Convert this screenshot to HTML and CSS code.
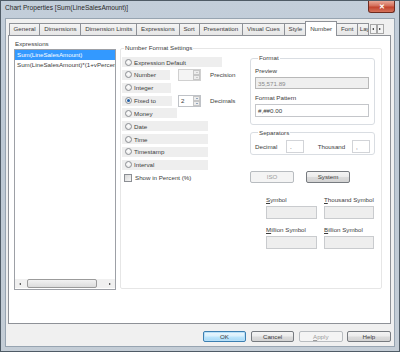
FILE: index.html
```html
<!DOCTYPE html>
<html lang="en">
<head>
    <meta charset="UTF-8">
    <title>Chart Properties</title>
    <link rel="stylesheet" href="styles.css">
</head>
<body>
<div class="window">
    <div class="titlebar">
        <span class="title">Chart Properties [Sum(LineSalesAmount)]</span>
        <span class="close">&#x2715;</span>
    </div>
    <div class="client">
        <div class="tabs">
            <div class="tab">General</div>
            <div class="tab">Dimensions</div>
            <div class="tab">Dimension Limits</div>
            <div class="tab">Expressions</div>
            <div class="tab">Sort</div>
            <div class="tab">Presentation</div>
            <div class="tab">Visual Cues</div>
            <div class="tab">Style</div>
            <div class="tab active">Number</div>
            <div class="tab">Font</div>
            <div class="tab cut">Layout</div>
            <div class="tab-arrows">
                <span class="arrow-btn"><i class="tri-left"></i></span>
                <span class="arrow-btn"><i class="tri-right"></i></span>
            </div>
        </div>

        <div class="page">
            <div class="expr-col">
                <div class="lbl expr-lbl">Expressions</div>
                <div class="listbox">
                    <div class="items">
                        <div class="item selected">Sum(LineSalesAmount)</div>
                        <div class="item">Sum(LineSalesAmount)*(1+vPercentage)</div>
                    </div>
                    <div class="hscroll">
                        <span class="sb-btn"><i class="tri-left small"></i></span>
                        <span class="sb-thumb"></span>
                        <span class="sb-btn"><i class="tri-right small"></i></span>
                    </div>
                </div>
            </div>

            <fieldset class="group main-group">
                <legend>Number Format Settings</legend>
                <div class="nf-body">
                    <div class="options">
                        <div class="opt">
                            <div class="bar w-expr"><span class="radio"></span>Expression Default</div>
                        </div>
                        <div class="opt">
                            <div class="opt-main">
                                <div class="bar w-num"><span class="radio"></span>Number</div>
                            </div>
                            <div class="spin disabled">
                                <span class="spin-val"></span>
                                <span class="spin-btns">
                                    <span class="spin-b"><i class="tri-up"></i></span>
                                    <span class="spin-b"><i class="tri-down"></i></span>
                                </span>
                            </div>
                            <span class="spin-note">Precision</span>
                        </div>
                        <div class="opt">
                            <div class="bar w-int"><span class="radio"></span>Integer</div>
                        </div>
                        <div class="opt">
                            <div class="opt-main">
                                <div class="bar w-fix"><span class="radio checked"></span>Fixed to</div>
                            </div>
                            <div class="spin">
                                <span class="spin-val">2</span>
                                <span class="spin-btns">
                                    <span class="spin-b"><i class="tri-up"></i></span>
                                    <span class="spin-b"><i class="tri-down"></i></span>
                                </span>
                            </div>
                            <span class="spin-note">Decimals</span>
                        </div>
                        <div class="opt">
                            <div class="bar w-money"><span class="radio"></span>Money</div>
                        </div>
                        <div class="opt">
                            <div class="bar w-long"><span class="radio"></span>Date</div>
                        </div>
                        <div class="opt">
                            <div class="bar w-long"><span class="radio"></span>Time</div>
                        </div>
                        <div class="opt">
                            <div class="bar w-long"><span class="radio"></span>Timestamp</div>
                        </div>
                        <div class="opt">
                            <div class="bar w-long"><span class="radio"></span>Interval</div>
                        </div>
                        <div class="check-row">
                            <span class="checkbox"></span>Show in Percent (%)
                        </div>
                    </div>

                    <div class="right-col">
                        <fieldset class="group sub-group format-group">
                            <legend>Format</legend>
                            <div class="lbl">Preview</div>
                            <div class="field preview">35,571.89</div>
                            <div class="lbl gap-lbl">Format Pattern</div>
                            <div class="field pattern">#,##0.00</div>
                        </fieldset>

                        <fieldset class="group sub-group sep-group">
                            <legend>Separators</legend>
                            <div class="sep-row">
                                <span class="sep-lbl">Decimal</span>
                                <span class="field small-field">.</span>
                                <span class="sep-lbl second">Thousand</span>
                                <span class="field small-field">,</span>
                            </div>
                        </fieldset>

                        <div class="std-row">
                            <span class="btn disabled">ISO</span>
                            <span class="btn">System</span>
                        </div>

                        <div class="symbols">
                            <div class="sym">
                                <div class="lbl"><u>S</u>ymbol</div>
                                <div class="field sym-field"></div>
                            </div>
                            <div class="sym">
                                <div class="lbl"><u>T</u>housand Symbol</div>
                                <div class="field sym-field"></div>
                            </div>
                            <div class="sym">
                                <div class="lbl"><u>M</u>illion Symbol</div>
                                <div class="field sym-field"></div>
                            </div>
                            <div class="sym">
                                <div class="lbl"><u>B</u>illion Symbol</div>
                                <div class="field sym-field"></div>
                            </div>
                        </div>
                    </div>
                </div>
            </fieldset>
        </div>

        <div class="buttons">
            <span class="btn big default">OK</span>
            <span class="btn big">Cancel</span>
            <span class="btn big disabled"><u>A</u>pply</span>
            <span class="btn big">Help</span>
        </div>
    </div>
</div>
</body>
</html>
```

FILE: styles.css
```css
* {
    box-sizing: border-box;
}

body {
    margin: 0;
    padding: 0;
    background: #ffffff;
    font-family: "Liberation Sans", Arial, sans-serif;
    font-size: 6.2px;
    color: #3c3c3c;
}

.window {
    width: 400px;
    height: 352px;
    display: flex;
    flex-direction: column;
    border: 1px solid #4f5b66;
    background: linear-gradient(180deg, #c3ceda 0%, #bcc8d4 40%, #c4cdd6 100%);
}

/* title bar */

.titlebar {
    height: 17px;
    display: flex;
    align-items: flex-start;
}

.title {
    padding: 3px 0 0 4px;
    font-size: 6.6px;
    line-height: 8px;
    color: #2a2a2a;
}

.close {
    margin-left: auto;
    margin-right: 4px;
    width: 27px;
    height: 12px;
    border: 1px solid #6e2b20;
    border-top: none;
    border-radius: 0 0 3px 3px;
    background: linear-gradient(180deg, #e9a998 0%, #d36c58 45%, #c2432d 55%, #d5735c 100%);
    color: #ffffff;
    font-size: 7px;
    font-weight: bold;
    line-height: 11px;
    text-align: center;
}

/* client area */

.client {
    flex: 1;
    margin: 0 4px 4px 4px;
    border: 1px solid #97a4b1;
    background: #f0f0f0;
    display: flex;
    flex-direction: column;
}

.tabs {
    position: relative;
    z-index: 1;
    height: 15px;
    margin: 2px 0 -1px 2.7px;
    display: flex;
    align-items: flex-end;
}

.tab {
    height: 12px;
    margin: 0 -1px 1px 0;
    padding: 0 3.85px;
    border: 1px solid #8e9197;
    border-bottom: none;
    background: linear-gradient(180deg, #f4f4f4 0%, #e6e6e6 100%);
    line-height: 10px;
    white-space: nowrap;
}

.tab.active {
    height: 15px;
    margin: 0 -1px 0 -1px;
    padding: 0 4px;
    background: #ffffff;
    line-height: 13px;
    position: relative;
    z-index: 2;
}

.tab.cut {
    width: 12px;
    padding: 0 1.5px;
    overflow: hidden;
}

.tab-arrows {
    display: flex;
    margin: 0 0 2px 1.5px;
}

.arrow-btn {
    width: 7px;
    height: 10px;
    border: 1px solid #a7a7a7;
    background: #f3f3f3;
    display: flex;
    align-items: center;
    justify-content: center;
}

.tri-left,
.tri-right,
.tri-up,
.tri-down {
    display: block;
    width: 0;
    height: 0;
}

.tri-left {
    border-top: 1.5px solid transparent;
    border-bottom: 1.5px solid transparent;
    border-right: 2px solid #1c1c1c;
}

.tri-right {
    border-top: 1.5px solid transparent;
    border-bottom: 1.5px solid transparent;
    border-left: 2px solid #1c1c1c;
}

.tri-up {
    border-left: 1.5px solid transparent;
    border-right: 1.5px solid transparent;
    border-bottom: 1.5px solid #3b5e8a;
}

.tri-down {
    border-left: 1.5px solid transparent;
    border-right: 1.5px solid transparent;
    border-top: 1.5px solid #3b5e8a;
}

/* tab page */

.page {
    height: 289px;
    margin: 0 3px 0 2px;
    padding: 4px 0 0 5px;
    border: 1px solid #8e9197;
    background: #ffffff;
    display: flex;
    align-items: flex-start;
}

.lbl {
    height: 8px;
    line-height: 8px;
    white-space: nowrap;
}

.expr-col {
    width: 102px;
}

.expr-lbl {
    padding-left: 1px;
    margin-bottom: 1px;
}

.listbox {
    height: 241px;
    border: 1px solid #9da0a6;
    display: flex;
    flex-direction: column;
}

.items {
    flex: 1;
    overflow: hidden;
}

.item {
    height: 10px;
    line-height: 10px;
    padding-left: 2px;
    white-space: nowrap;
}

.item.selected {
    background: #3399ff;
    color: #ffffff;
}

.hscroll {
    height: 9px;
    margin-bottom: 1px;
    display: flex;
    background: #f0f0f0;
    gap: 1px;
}

.sb-btn {
    width: 10px;
    display: flex;
    align-items: center;
    justify-content: center;
}

.sb-thumb {
    flex: 1;
    margin: 0 7px 0 1px;
    border: 1px solid #9b9b9b;
    border-radius: 2px;
    background: linear-gradient(180deg, #f2f2f2 0%, #dcdcdc 100%);
}

.small {
    transform: scale(0.9);
}

/* group boxes */

.group {
    margin: 0;
    padding: 0;
    border: 1px solid #e0e0e0;
    border-radius: 2px;
    min-width: 0;
}

.group legend {
    padding: 0 1px;
    margin-left: 3px;
    height: 8px;
    line-height: 8px;
}

.main-group {
    width: 262px;
    margin: 4px 0 0 4px;
    padding: 0 6px 39px 0;
    border-color: #e6e6e6;
}

.nf-body {
    display: flex;
    align-items: flex-start;
}

.options {
    width: 129px;
    padding-left: 1px;
    margin-top: 5px;
}

.opt {
    height: 10px;
    margin-bottom: 2.85px;
    display: flex;
    align-items: center;
}

.bar {
    height: 10px;
    padding-left: 3px;
    display: flex;
    align-items: center;
    background: #eeeeee;
    white-space: nowrap;
}

.w-expr { width: 100px; }
.w-num { width: 48px; }
.w-int { width: 49px; }
.w-fix { width: 50px; }
.w-money { width: 55px; }
.w-long { width: 86px; }

.opt-main {
    width: 56px;
}

.radio {
    width: 7px;
    height: 7px;
    margin-right: 2px;
    border: 1px solid #8c8f94;
    border-radius: 50%;
    background: radial-gradient(circle at 50% 40%, #ffffff 0%, #e4e4e4 100%);
    display: flex;
    align-items: center;
    justify-content: center;
}

.radio.checked::after {
    content: "";
    width: 3px;
    height: 3px;
    border-radius: 50%;
    background: #1f5ea6;
}

.spin {
    width: 23px;
    height: 12px;
    border: 1px solid #bfc2c7;
    background: #ffffff;
    display: flex;
    flex-shrink: 0;
}

.spin.disabled {
    background: #f4f4f4;
    border-color: #d0d0d0;
}

.spin.disabled .tri-up {
    border-bottom-color: #a8a8a8;
}

.spin.disabled .tri-down {
    border-top-color: #a8a8a8;
}

.spin-val {
    flex: 1;
    padding-left: 2px;
    line-height: 10px;
}

.spin-btns {
    width: 7px;
    display: flex;
    flex-direction: column;
}

.spin-b {
    flex: 1;
    border: 1px solid #c6c6c6;
    background: #ececec;
    display: flex;
    align-items: center;
    justify-content: center;
}

.spin-note {
    margin-left: 9px;
}

.check-row {
    height: 10px;
    margin-top: 1.4px;
    padding-left: 2px;
    display: flex;
    align-items: center;
    white-space: nowrap;
}

.checkbox {
    width: 8px;
    height: 8px;
    margin-right: 3px;
    border: 1px solid #8c8f94;
    background: linear-gradient(135deg, #d8d8d8 0%, #f6f6f6 100%);
}

/* right column */

.right-col {
    width: 125px;
    margin-top: 2px;
}

.sub-group {
    width: 125px;
    border-color: #d9dde2;
    border-radius: 3px;
}

.format-group {
    padding: 4.7px 5px 6.7px 4px;
}

.field {
    border: 1px solid #c4c6ca;
    background: #ffffff;
    padding-left: 2px;
    white-space: nowrap;
}

.preview {
    height: 12.6px;
    margin-top: 2px;
    line-height: 11px;
    background: #efefef;
    border-color: #b8b8b8;
    color: #8b8b8b;
}

.gap-lbl {
    margin-top: 4.7px;
}

.pattern {
    height: 13.3px;
    margin-top: 2px;
    line-height: 11.5px;
}

.sep-group {
    margin-top: 4px;
    padding: 3px 0 1px 4px;
}

.sep-row {
    height: 13px;
    display: flex;
    align-items: center;
}

.sep-lbl {
    width: 31px;
}

.sep-lbl.second {
    width: 34.3px;
    margin-left: 13.7px;
}

.small-field {
    width: 18px;
    height: 13px;
    line-height: 11px;
    padding-left: 3px;
    border-color: #d2d4d8;
}

.btn {
    height: 12px;
    border: 1px solid #777b80;
    border-radius: 2px;
    background: linear-gradient(180deg, #f4f4f4 0%, #ebebeb 48%, #dcdcdc 52%, #d3d3d3 100%);
    display: flex;
    align-items: center;
    justify-content: center;
    white-space: nowrap;
}

.btn.disabled {
    border-color: #b8bcc0;
    background: #f4f4f4;
    color: #9c9c9c;
}

.std-row {
    margin-top: 15.7px;
    display: flex;
    gap: 12px;
}

.std-row .btn {
    width: 44px;
}

.symbols {
    margin-top: 13.3px;
    padding-left: 16px;
    display: grid;
    grid-template-columns: 51px 50px;
    column-gap: 7px;
    row-gap: 6.7px;
}

.sym-field {
    height: 13.3px;
    margin-top: 2px;
    background: #eeeeee;
    border-color: #c9cbce;
}

/* bottom buttons */

.buttons {
    margin-top: 6.7px;
    padding-right: 3.3px;
    display: flex;
    justify-content: flex-end;
    gap: 4.7px;
}

.btn.big {
    width: 43.5px;
    height: 11px;
}

.btn.default {
    border-color: #3c7fb1;
    background: linear-gradient(180deg, #eaf6fd 0%, #d9f0fc 48%, #bee6fd 52%, #a7d9f5 100%);
    box-shadow: inset 0 0 0 1px #b8e0f8;
}
```
